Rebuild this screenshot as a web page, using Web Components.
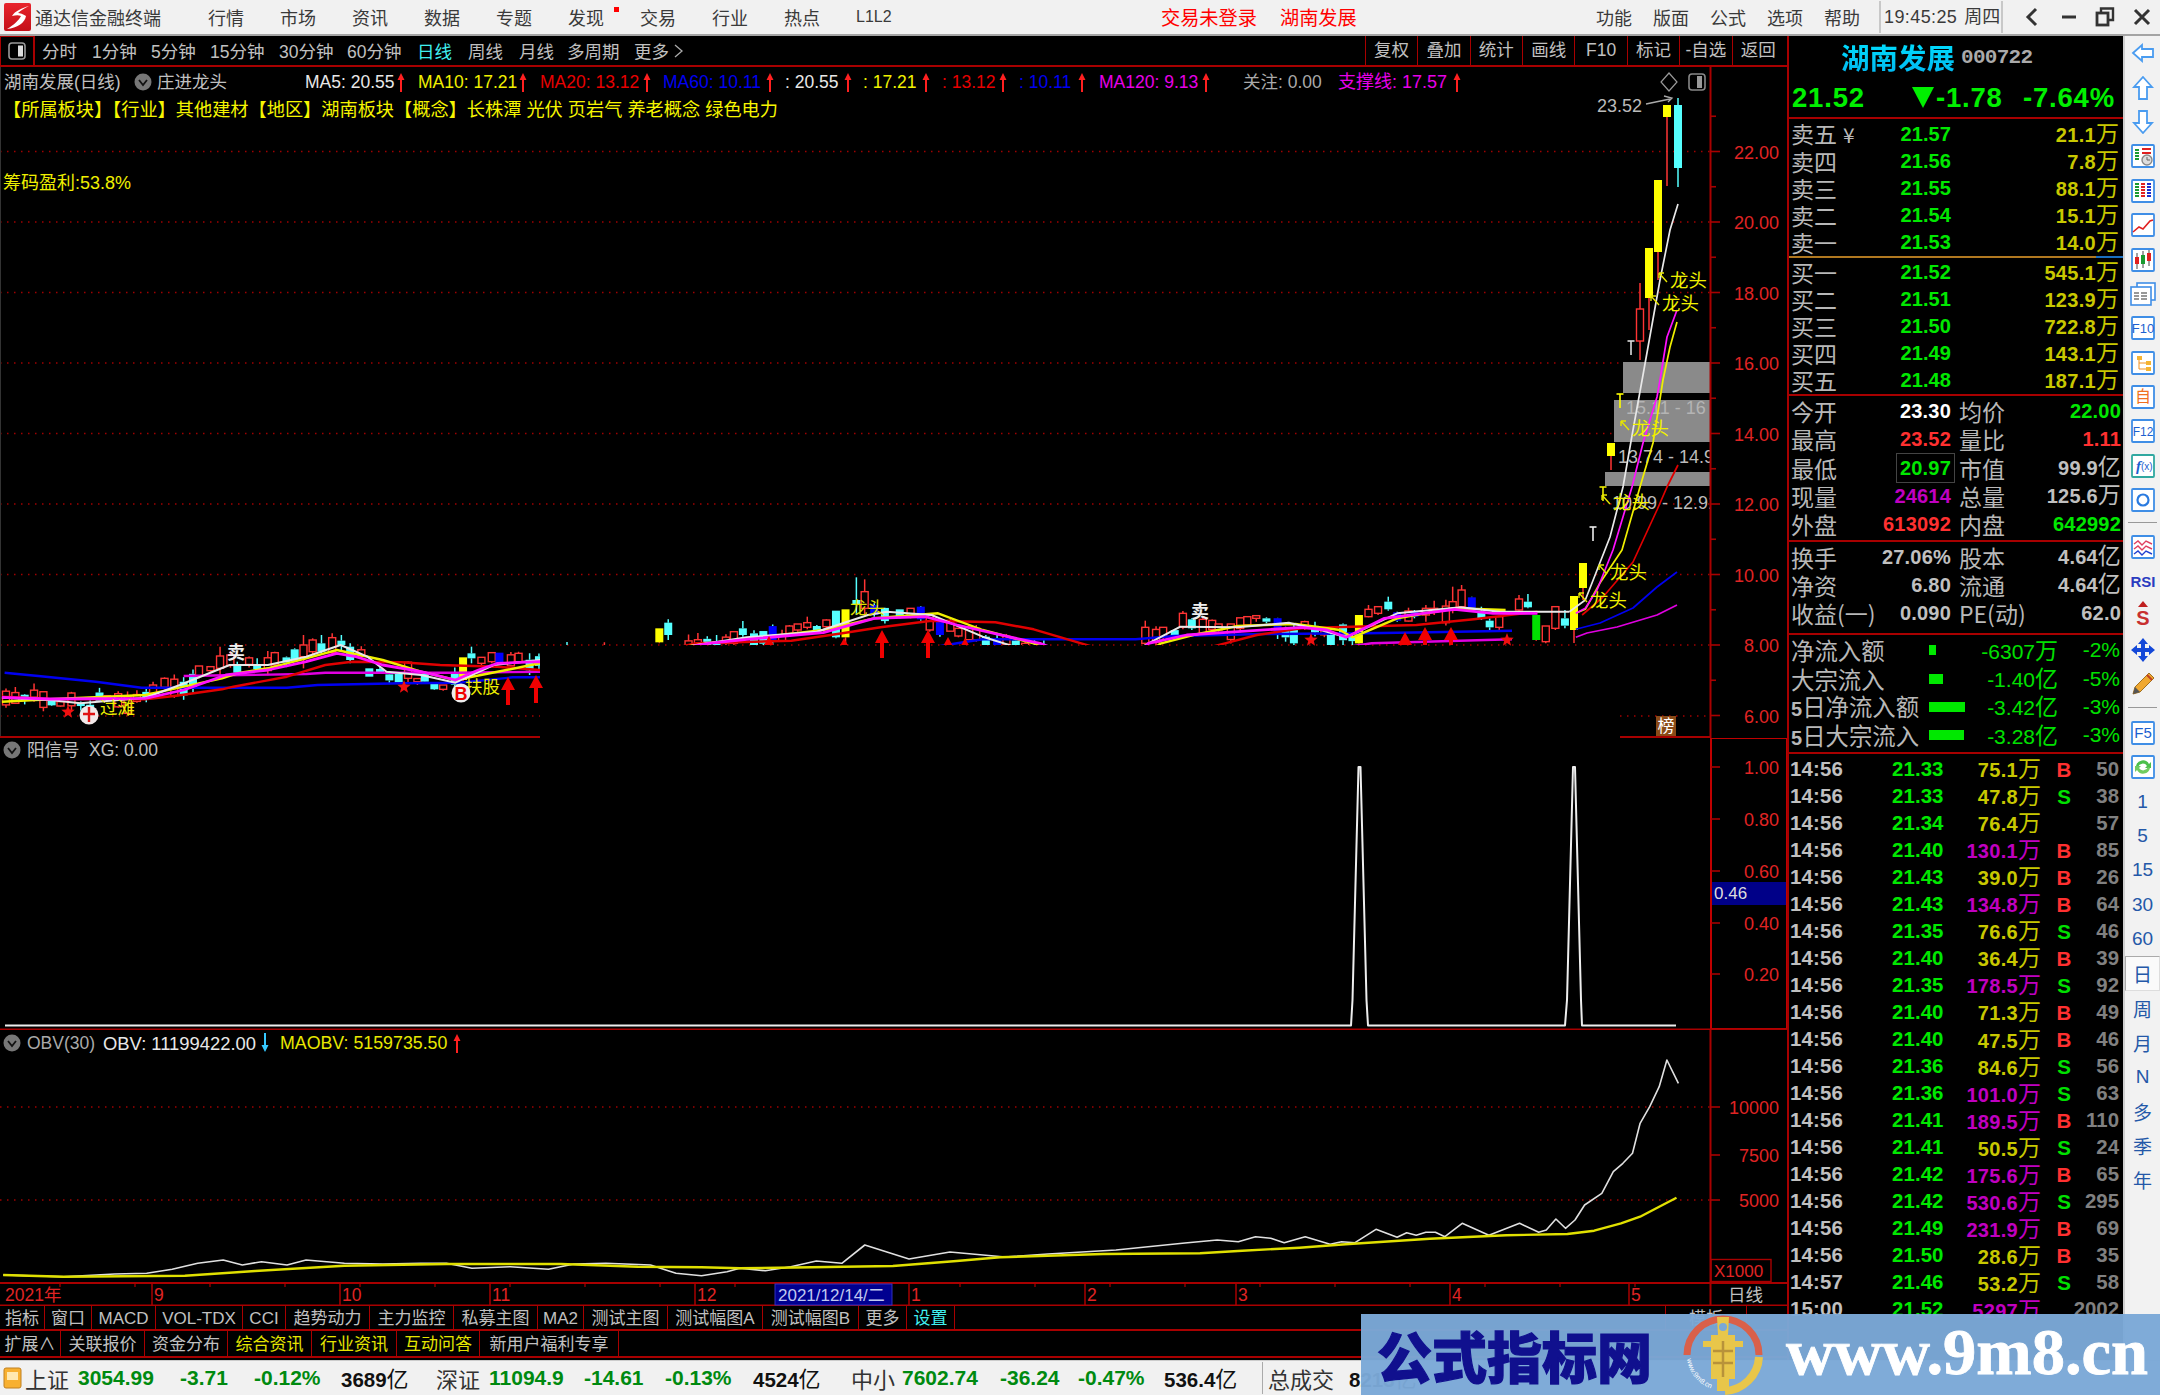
<!DOCTYPE html>
<html lang="zh-CN"><head><meta charset="utf-8"><title>通达信金融终端</title>
<style>
html,body{margin:0;padding:0;background:#000}
body{width:2160px;height:1395px;overflow:hidden;position:relative;font-family:"Liberation Sans","Noto Sans CJK SC",sans-serif;display:flex;flex-direction:column}
</style></head><body>
<tdx-titlebar></tdx-titlebar>
<tdx-workspace>
  <tdx-chart-column slot="chart">
    <tdx-period-bar></tdx-period-bar>
    <tdx-pane-main></tdx-pane-main>
    <tdx-pane-signal></tdx-pane-signal>
    <tdx-pane-obv></tdx-pane-obv>
    <tdx-date-axis></tdx-date-axis>
    <tdx-tab-row h="25">
      <tdx-tab w="45">指标</tdx-tab><tdx-tab w="47">窗口</tdx-tab><tdx-tab w="64">MACD</tdx-tab><tdx-tab w="87">VOL-TDX</tdx-tab><tdx-tab w="43">CCI</tdx-tab><tdx-tab w="84">趋势动力</tdx-tab><tdx-tab w="84">主力监控</tdx-tab><tdx-tab w="84">私募主图</tdx-tab><tdx-tab w="46">MA2</tdx-tab><tdx-tab w="84">测试主图</tdx-tab><tdx-tab w="95">测试幅图A</tdx-tab><tdx-tab w="96">测试幅图B</tdx-tab><tdx-tab w="48">更多</tdx-tab><tdx-tab w="48" tone="c">设置</tdx-tab><tdx-tab w="711"></tdx-tab><tdx-tab w="81">模板</tdx-tab>
    </tdx-tab-row>
    <tdx-tab-row h="27">
      <tdx-tab w="61">扩展∧</tdx-tab><tdx-tab w="84">关联报价</tdx-tab><tdx-tab w="83">资金分布</tdx-tab><tdx-tab w="84" tone="y">综合资讯</tdx-tab><tdx-tab w="85" tone="y">行业资讯</tdx-tab><tdx-tab w="83" tone="y">互动问答</tdx-tab><tdx-tab w="139">新用户福利专享</tdx-tab>
    </tdx-tab-row>
  </tdx-chart-column>
  <tdx-quote slot="quote">
    <tdx-quote-head></tdx-quote-head>
    <tdx-order-book></tdx-order-book>
    <tdx-stats></tdx-stats>
    <tdx-flows></tdx-flows>
    <tdx-ticks></tdx-ticks>
  </tdx-quote>
  <tdx-sidebar slot="side"></tdx-sidebar>
</tdx-workspace>
<tdx-statusbar></tdx-statusbar>
<tdx-watermark></tdx-watermark>
<script>
function def(name,css,html){customElements.define(name,class extends HTMLElement{connectedCallback(){if(this.shadowRoot)return;const r=this.attachShadow({mode:'open'});r.innerHTML='<style>'+css+'</style>'+(typeof html==='function'?html(this):html);}});}
const CJK='"Liberation Sans","Noto Sans CJK SC",sans-serif';
const RED='#a80000',LBL='#e02424',GREY='#c0c0c0';

/* ---------- svg helpers ---------- */
const T=(x,y,s,fill,size=17.5,anchor='start',extra='')=>`<text x="${x}" y="${y}" fill="${fill}" font-size="${size}" text-anchor="${anchor}" dominant-baseline="central" ${extra}>${s}</text>`;
const R=(x,y,w,h,f,extra='')=>`<rect x="${x}" y="${y}" width="${w}" height="${h}" fill="${f}" ${extra}/>`;
const Ln=(a,b,c,d,col,w=1,extra='')=>`<line x1="${a}" y1="${b}" x2="${c}" y2="${d}" stroke="${col}" stroke-width="${w}" ${extra}/>`;
const P=(pts,col,w=2)=>`<polyline fill="none" stroke="${col}" stroke-width="${w}" stroke-linejoin="round" points="${pts.map(p=>p[0].toFixed(1)+','+p[1].toFixed(1)).join(' ')}"/>`;
const Seg=(pts,col,w=2.6)=>{const a=pts.filter(p=>p[0]<=1572),b=pts.filter(p=>p[0]>=1560);return P(a,col,w)+P(b,col,1.7);};
const Dots=(a,b,y)=>Ln(a,y,b,y,'#a00000',1.5,'stroke-dasharray="1.5 5.5"');
const UpA=(x,cy,c='#ff2020')=>`<path d="M${x} ${cy-9}L${x+3.5} ${cy-2}H${x+1}V${cy+10}H${x-1}V${cy-2}H${x-3.5}Z" fill="${c}"/>`;
const DnA=(x,cy,c='#35c8ff')=>`<path d="M${x} ${cy+9}L${x+3.5} ${cy+2}H${x+1}V${cy-10}H${x-1}V${cy+2}H${x-3.5}Z" fill="${c}"/>`;
const Chev=(cx,cy)=>`<circle cx="${cx}" cy="${cy}" r="8.5" fill="#777"/><path d="M${cx-4} ${cy-2}L${cx} ${cy+3}L${cx+4} ${cy-2}" fill="none" stroke="#111" stroke-width="1.8"/>`;
const Star=(cx,cy,r=7)=>{let d='';for(let i=0;i<10;i++){const a=-Math.PI/2+i*Math.PI/5,q=i%2?r*.42:r;d+=(i?'L':'M')+(cx+q*Math.cos(a)).toFixed(1)+' '+(cy+q*Math.sin(a)).toFixed(1);}return `<path d="${d}Z" fill="#f01010"/>`;};
const BigUp=(x,top)=>`<path d="M${x} ${top}L${x+7} ${top+13}H${x+2}V${top+28}H${x-2}V${top+13}H${x-7}Z" fill="#f00000"/>`;
const svgCss=`:host{display:block;flex:none}svg{display:block;font-family:${CJK};background:#000}`;

/* ---------- chart data ---------- */
const L=a=>a.map(([X,Y])=>[X/2.613,600+Y/3]);
const M=a=>a.map(([X,Y])=>[600+X/1.568,550+Y/3]);
const white=[...L([[5,293],[130,300],[210,310],[380,293],[470,255],[600,195],[700,195],[800,170],[890,135],[960,170],[1010,215],[1100,225],[1190,248],[1290,195],[1410,180]]),...M([[0,330],[100,300],[170,280],[230,262],[340,245],[420,195],[450,185],[520,195],[600,260],[650,290],[720,340],[810,340],[860,280],[910,230],[1000,232],[1080,218],[1130,240],[1170,262],[1250,190],[1350,172],[1410,185],[1470,185],[1520,185],[1545,150]]),[1592,583],[1610,537],[1623,487],[1633,430],[1643,375],[1660,280],[1670,230],[1678,204]];
const yellow=[...L([[5,305],[130,298],[380,285],[480,260],[580,235],[620,220],[700,205],[800,175],[880,150],[1000,180],[1100,215],[1190,240],[1280,220],[1410,190]]),...M([[0,330],[100,300],[170,280],[350,240],[430,205],[530,190],[600,240],[680,280],[750,340],[830,340],[880,280],[930,255],[1000,228],[1090,222],[1160,240],[1180,262],[1250,205],[1340,175],[1420,180],[1530,190],[1545,178]]),[1600,583],[1622,550],[1640,487],[1653,443],[1663,380],[1670,347],[1677,322]];
const red=[...L([[5,290],[130,297],[380,298],[460,287],[580,268],[610,260],[750,230],[850,195],[920,185],[1050,187],[1150,195],[1300,200],[1410,210]]),...M([[0,340],[150,280],[300,272],[380,250],[440,232],[520,212],[620,217],[680,238],[740,272],[790,300],[900,320],[980,280],[1030,255],[1100,235],[1150,232],[1280,225],[1370,208],[1470,185],[1540,195]]),[1603,597],[1633,562],[1657,510],[1667,487],[1678,465]];
const blue=[...L([[12,218],[100,228],[250,245],[370,263],[750,263],[830,255],[1050,250],[1200,248],[1340,232],[1410,232]]),...M([[400,330],[560,280],[600,268],[840,268],[900,258],[1040,252],[1200,250],[1300,247],[1430,242],[1530,238]]),[1600,623],[1633,608],[1657,587],[1677,572]];
const mag=[...L([[5,292],[130,297],[380,295],[480,270],[590,225],[700,210],[800,185],[880,160],[930,170],[1000,195],[1100,215],[1190,240],[1250,210],[1300,190],[1410,185]]),...M([[0,340],[170,280],[230,268],[350,248],[430,205],[510,200],[560,225],[640,260],[690,280],[770,340],[830,340],[860,280],[920,255],[1000,245],[1100,232],[1140,240],[1170,262],[1230,205],[1340,178],[1400,190],[1470,190],[1530,190],[1545,175]]),[1597,590],[1613,550],[1632,487],[1643,443],[1657,397],[1660,380],[1667,337],[1677,310]];
const mag2=[...L([[480,228],[800,222],[850,218],[1200,218],[1410,215]]),...M([[1000,340],[1210,280],[1430,268],[1530,262]]),[1587,633],[1617,627],[1657,615],[1677,605]];
const interp=(pts,x)=>{for(let i=1;i<pts.length;i++){if(x<=pts[i][0]&&pts[i][0]>pts[i-1][0]){const [a,b]=pts[i-1],[c,d]=pts[i];return b+(d-b)*(x-a)/(c-a);}}return pts[pts.length-1][1];};
const exL=[[575,168,205,140,225,'r'],[520,198,228,198,235,'r'],[840,130,155,105,165,'c'],[793,135,170,105,205,'r'],[817,120,155,115,165,'r'],[868,113,158,100,165,'r'],[718,158,195,155,200,'r'],[770,148,182,145,185,'c'],[892,122,135,105,155,'c'],[915,140,180,130,190,'c'],[965,205,230,205,230,'c'],[1210,172,240,172,245,'y'],[1232,160,175,140,190,'c'],[1285,158,185,158,190,'r'],[1355,160,185,155,190,'r'],[1305,158,190,158,190,'b'],[1258,172,190,172,200,'r'],[1110,220,245,215,250,'c'],[1135,252,268,250,270,'c'],[1158,255,268,255,272,'r'],[620,195,218,185,220,'c'],[135,298,316,295,318,'c'],[158,305,318,305,320,'r'],[400,255,280,245,285,'r'],[430,235,262,232,265,'r'],[672,195,208,175,210,'c'],[550,200,212,198,215,'r'],[280,287,300,287,302,'r']].map(([X,a,b,c,d,t])=>[X/2.613,600+a/3,600+b/3,600+c/3,600+d/3,t]);
const exM=[[93,235,277,235,280,'y'],[107,218,255,208,270,'c'],[224,235,255,213,260,'c'],[210,245,280,245,285,'r'],[297,228,250,225,255,'r'],[310,222,240,222,245,'r'],[325,218,232,200,238,'r'],[355,210,230,208,235,'r'],[340,228,245,225,250,'c'],[370,182,262,182,265,'c'],[385,178,262,178,290,'y'],[402,150,165,82,195,'c'],[415,125,175,88,200,'r'],[430,165,195,160,200,'b'],[487,175,200,175,205,'r'],[470,178,198,178,205,'c'],[503,170,208,168,212,'b'],[517,195,240,195,245,'r'],[533,210,255,208,260,'b'],[562,235,258,235,262,'r'],[590,235,270,225,275,'r'],[605,260,290,255,300,'c'],[855,232,280,212,285,'r'],[883,232,262,232,270,'r'],[914,190,232,183,238,'r'],[928,208,235,205,240,'c'],[970,222,240,222,245,'r'],[1015,200,225,200,228,'r'],[1029,197,205,197,215,'r'],[1045,205,215,202,220,'c'],[1105,215,235,212,240,'r'],[1075,235,262,230,275,'c'],[1088,238,280,225,290,'c'],[1146,255,290,250,295,'c'],[1190,195,280,195,290,'y'],[1205,178,200,165,202,'r'],[1220,170,190,170,195,'r'],[1236,155,178,140,182,'c'],[1250,187,212,185,215,'b'],[1277,183,200,180,205,'b'],[1295,175,195,165,215,'r'],[1308,175,185,152,195,'r'],[1337,155,180,110,190,'r'],[1351,120,170,105,175,'r'],[1367,142,182,140,185,'b'],[1382,185,205,170,210,'c'],[1395,212,232,205,240,'c'],[1410,200,232,195,240,'r'],[1441,147,180,135,185,'r'],[1455,155,172,132,175,'c'],[1468,195,270,195,272,'g'],[1483,228,275,228,280,'r'],[1498,170,235,168,240,'r'],[1513,205,227,180,235,'c']].map(([X,a,b,c,d,t])=>[600+X/1.568,550+a/3,550+b/3,550+c/3,550+d/3,t]);
const exR=[[1574,596,630,596,643,'y'],[1583,563,588,563,600,'y'],[1611,443,456,443,470,'y'],[1640,309,341,283,360,'r'],[1649,248,298,248,330,'y'],[1658,180,252,180,280,'y'],[1667,105,117,105,186,'y'],[1678,105,168,98,187,'c']];
const explicit=[...exL,...exM,...exR];
let seed=722;const rnd=()=>{seed=(seed*1664525+1013904223)>>>0;return seed/4294967296;};
const colors={r:'#ff3434',c:'#55ffff',y:'#ffff00',g:'#00e000',b:'#0000ff'};
function candle([x,a,b,c,d,t]){const col=colors[t];const wickCol=(t==='y'||t==='g')?'#ff3434':(t==='b'?'#55ffff':col);
 let s=Ln(x,c,x,a,wickCol,1.5)+Ln(x,b,x,d,wickCol,1.5);
 s+= t==='r'?`<rect x="${x-3.5}" y="${a}" width="7" height="${Math.max(b-a,2)}" fill="#000" stroke="${col}" stroke-width="1.4"/>`:R(x-4,a,8,Math.max(b-a,2),col);return s;}
function allCandles(){let out='';for(let x=6;x<1500;x+=9.35){if(explicit.some(e=>Math.abs(e[0]-x)<5.5))continue;const base=interp(white,x)+(rnd()-.5)*12;const h=1.5+rnd()*7;const k=rnd();const t=k<.55?'r':(k<.95?'c':'b');out+=candle([x,base-h,base+h,base-h-rnd()*7,base+h+rnd()*5,t]);}return out+explicit.map(candle).join('');}
const tee=(x,y,c)=>Ln(x-3.5,y,x+3.5,y,c,1.6)+Ln(x,y,x,y+14,c,1.6);
const dragon=(x,y)=>`<path d="M${x-11} ${y-7}L${x-3} ${y+2}M${x-11} ${y-7}v5M${x-11} ${y-7}h5" stroke="#e6e600" fill="none" stroke-width="1.4"/>`+T(x,y,'龙头','#f0f000',18.4);

/* ---------- title bar ---------- */
const logo=`<svg width="27" height="28" viewBox="0 0 27 28"><defs><linearGradient id="l" x1="0" y1="0" x2="0" y2="1"><stop offset="0" stop-color="#e8242c"/><stop offset="1" stop-color="#c41018"/></linearGradient></defs><rect width="27" height="28" rx="2" fill="url(#l)"/><path d="M25 3C18 5 11 8 8 13C12 12 15 12 17 13C15 17 10 22 3 26C13 25 21 20 22 13C19 11 16 10 14 10C17 7 21 5 25 3Z" fill="#fff"/></svg>`;
const ctl={back:`<svg width="18" height="20" viewBox="0 0 18 20"><path d="M12 2L4 10L12 18" fill="none" stroke="#333" stroke-width="3"/></svg>`,
 min:`<svg width="18" height="20" viewBox="0 0 18 20"><path d="M2 10H16" stroke="#333" stroke-width="3"/></svg>`,
 max:`<svg width="20" height="20" viewBox="0 0 20 20"><path d="M6 5V1.5H18V13H14" fill="none" stroke="#333" stroke-width="2.4"/><rect x="2" y="6" width="11" height="12" fill="none" stroke="#333" stroke-width="2.8"/></svg>`,
 x:`<svg width="18" height="20" viewBox="0 0 18 20"><path d="M2 3L16 17M16 3L2 17" stroke="#333" stroke-width="3"/></svg>`};
def('tdx-titlebar',`:host{display:flex;flex:none;height:34px;border-bottom:2px solid #a4a4a4;background:#f1f1f1;align-items:center;font-size:18px;color:#3a3a3a;box-sizing:content-box}
.logo{width:35px;padding-left:4px;box-sizing:border-box;display:flex}.logo svg{display:block}
.name{width:173px;white-space:nowrap}
.m{width:72px;white-space:nowrap;position:relative}.m i{position:absolute;left:46px;top:3px;width:5px;height:5px;background:#f00}
.ll{font-size:16px;width:72px}.red{color:#f00;font-size:19.2px;white-space:nowrap}
.r{width:57px;white-space:nowrap}.c1{margin-left:auto}
.time{width:124px;margin-left:-1px;padding-left:3px;box-sizing:border-box;border-left:2px solid #c8c8c8;border-right:2px solid #c8c8c8;height:32px;line-height:32px;white-space:nowrap;letter-spacing:.4px}
.time span{margin-left:7px;letter-spacing:0}
.ct{display:flex;width:157px;justify-content:space-around;padding-left:12px;box-sizing:border-box}svg{display:block}`,
`<div class="logo">${logo}</div><div class="name">通达信金融终端</div>
<div class="m">行情</div><div class="m">市场</div><div class="m">资讯</div><div class="m">数据</div><div class="m">专题</div><div class="m">发现<i></i></div><div class="m">交易</div><div class="m">行业</div><div class="m">热点</div><div class="ll">L1L2</div>
<div class="red" style="margin-left:233px;width:119px">交易未登录</div><div class="red">湖南发展</div>
<div class="r c1">功能</div><div class="r">版面</div><div class="r">公式</div><div class="r">选项</div><div class="r" style="width:56px">帮助</div>
<div class="time">19:45:25<span>周四</span></div><div class="ct">${ctl.back}${ctl.min}${ctl.max}${ctl.x}</div>`);

def('tdx-workspace',`:host{display:flex;flex:none;height:1324px;background:#000}`,`<slot name="chart"></slot><slot name="quote"></slot><slot name="side"></slot>`);
def('tdx-chart-column',`:host{display:flex;flex-direction:column;flex:none;width:1787px;height:1324px}`,`<slot></slot>`);

/* ---------- period bar ---------- */
def('tdx-period-bar',`:host{display:flex;flex:none;height:29px;border-bottom:2px solid ${RED};align-items:center;font-size:17.5px;color:${GREY};white-space:nowrap}
.i{width:35px;height:29px;box-sizing:border-box;border:1px solid ${RED};border-width:1px 2px 0 1px;display:flex;align-items:center;justify-content:center;margin-right:7px}
.on{color:#40f0f0}.s{flex:1}.b{width:52.4px;height:29px;line-height:29px;text-align:center;border-left:1.5px solid ${RED};box-sizing:border-box}svg{display:block}`,
()=>{const it=[[50,'分时'],[59,'1分钟'],[59,'5分钟'],[69,'15分钟'],[68,'30分钟'],[70,'60分钟'],[51,'日线','on'],[51,'周线'],[48,'月线'],[67,'多周期']];
 return `<div class="i"><svg width="18" height="18" viewBox="0 0 18 18"><rect x="1" y="1" width="16" height="16" rx="3" fill="none" stroke="#999" stroke-width="1.6"/><rect x="10" y="3.5" width="5" height="11" fill="#ddd"/></svg></div>`+it.map(a=>`<div style="width:${a[0]}px" class="${a[2]||''}">${a[1]}</div>`).join('')+`<div>更多 <svg style="display:inline" width="9" height="14" viewBox="0 0 9 14"><path d="M1 1L8 7L1 13" fill="none" stroke="#aaa" stroke-width="1.3"/></svg></div><div class="s"></div>`+['复权','叠加','统计','画线','F10','标记','-自选','返回'].map(s=>`<div class="b">${s}</div>`).join('')+`<div style="width:3px"></div>`;});

/* ---------- main pane ---------- */
def('tdx-pane-main',svgCss,()=>{
 let s=`<svg width="1787" height="671" viewBox="0 67 1787 671">`;
 const prices=[22,20,18,16,14,12,10,8];
 prices.forEach(p=>{const y=645-(p-8)*35.25;s+=Dots(0,p===16?1622:(p===14?1612:1710),y);});
 s+=Dots(0,540,716)+Dots(1620,1710,716);
 s+=R(1623,362,87,31,'#8a8a8a')+R(1614,400,96,42,'#8a8a8a')+R(1605,472,105,14,'#8a8a8a');
 s+=`<svg x="1600" y="395" width="110" height="120" viewBox="1600 395 110 120">`+T(1626,408,'15.11 - 16','#b4b4b4',18)+T(1618,457,'13.74 - 14.9','#bbb',18)+T(1612,503,'10.99 - 12.91','#bbb',18)+`</svg>`;
 s+=`<clipPath id="cp"><rect x="0" y="68" width="1710" height="577"/><rect x="0" y="645" width="540" height="92"/><rect x="1620" y="645" width="90" height="92"/></clipPath><g clip-path="url(#cp)">`;
 s+=allCandles();
 s+=Seg(blue,'#0000f0',2.4)+Seg(mag2,'#e000e0',2.4)+Seg(red,'#e00000',2.4)+Seg(yellow,'#f0f000',2.4)+Seg(white,'#e8e8e8',2)+Seg(mag,'#ff10ff',2.8);
 s+=`</g>`;
 s+=tee(1631,341,'#ddd')+tee(1620,394,'#ff0')+tee(1603,487,'#ee0')+tee(1593,527,'#eee');
 s+=T(236,653,'卖','#eee',18,'middle','font-weight="700"')+T(1200,612,'卖','#eee',18,'middle','font-weight="700"');
 s+=T(100,708,'过滩','#f0f000',17.5)+T(465,687,'扶股','#f0f000',17.5)+T(850,608,'龙头','#e0e000',17.5);
 [[68,712],[404,687],[1311,640],[1507,640]].forEach(a=>s+=Star(a[0],a[1]));
 s+=`<circle cx="89" cy="715" r="9.5" fill="#f2e8e8"/><path d="M89 707V722M83 714H95" stroke="#e01010" stroke-width="2.4"/>`;
 s+=`<circle cx="461" cy="693" r="9.5" fill="#eee"/>`+T(461,694,'B','#f00000',18,'middle','font-weight="700"');
 [[508,677],[536,675],[882,630],[928,630]].forEach(a=>s+=BigUp(a[0],a[1]));
 s+=`<clipPath id="ca"><rect x="0" y="68" width="1710" height="577"/></clipPath><g clip-path="url(#ca)">`;
 [[769,636],[844,638],[948,637],[965,638],[1405,632],[1425,627],[1451,627]].forEach(a=>s+=BigUp(a[0],a[1]));
 s+=`</g>`;
 [[1670,280],[1662,303],[1632,428],[1613,502],[1610,572],[1590,600]].forEach(a=>s+=dragon(a[0],a[1]));
 s+=R(1656,716,20,20,'#8a4a17')+T(1666,726,'榜','#fff',17,'middle');
 s+=T(1597,106,'23.52','#bbb',18)+`<path d="M1646 104L1670 99M1664 96L1672 98L1668 102" fill="none" stroke="#aaa" stroke-width="1.3"/>`;
 s+=Ln(1710.5,67,1710.5,738,RED,2)+Ln(0.5,67,0.5,738,'#333',1);
 for(let p=6;p<=23;p++){const y=645-(p-8)*35.25;s+=Ln(1711,y,p%2?1716:1720,y,RED,1.6);}
 [22,20,18,16,14,12,10,8,6].forEach(p=>{const y=645-(p-8)*35.25;s+=T(1779,y+1,p.toFixed(2),LBL,18,'end');});
 s+=Ln(0,737,540,737,RED,2)+Ln(1620,737,1711,737,RED,2);
 const y=82;
 s+=T(4,y,'湖南发展(日线)',GREY)+Chev(143,y)+T(157,y,'庄进龙头',GREY);
 s+=T(305,y,'MA5: 20.55','#e8e8e8')+UpA(401,y)+T(418,y,'MA10: 17.21','#f0f000')+UpA(523,y)+T(540,y,'MA20: 13.12','#e80000')+UpA(647,y)+T(663,y,'MA60: 10.11','#0000f0')+UpA(770,y);
 s+=T(785,y,': 20.55','#e8e8e8')+UpA(848,y)+T(863,y,': 17.21','#f0f000')+UpA(926,y)+T(942,y,': 13.12','#e80000')+UpA(1003,y)+T(1019,y,': 10.11','#0000f0')+UpA(1082,y);
 s+=T(1099,y,'MA120: 9.13','#e800e8')+UpA(1206,y)+T(1243,y,'关注: 0.00','#aaa')+T(1338,y,'支撑线: 17.57','#e800e8',18)+UpA(1457,y);
 s+=`<path d="M1669 73L1677 82L1669 91L1661 82Z" fill="none" stroke="#999" stroke-width="1.2"/><rect x="1689" y="74" width="16" height="16" rx="3" fill="none" stroke="#888" stroke-width="1.6"/><rect x="1697" y="76" width="5" height="12" fill="#999"/>`;
 s+=T(3,109.5,'【所属板块】【行业】其他建材【地区】湖南板块【概念】长株潭 光伏 页岩气 养老概念 绿色电力','#f6f600',18.2);
 s+=T(3,183,'筹码盈利:53.8%','#f0f000',18);
 return s+`</svg>`;});

/* ---------- signal pane ---------- */
def('tdx-pane-signal',svgCss,()=>{
 let s=`<svg width="1787" height="292" viewBox="0 738 1787 292">`;
 const spike=x=>[[x-8,1025],[x-7,1000],[x-1,767],[x+1,767],[x+7,1000],[x+8,1025]];
 const base=[[5,1025.5],[1351,1025.5],...spike(1359.5).slice(1,5),[1368,1025.5],[1565,1025.5],...spike(1574).slice(1,5),[1582,1025.5],[1676,1025.5]];
 s+=P(base,'#eee',2);
 s+=T(27,750,'阳信号',GREY)+Chev(12,750)+T(89,750,'XG: 0.00',GREY);
 s+=`<rect x="1711" y="738" width="76" height="291" fill="none" stroke="#c00000" stroke-width="2"/>`;
 [[1,767],[.8,819],[.6,871],[.4,923],[.2,974]].forEach(a=>{s+=Ln(1711,a[1],1720,a[1],RED,1.6)+T(1779,a[1]+1,a[0].toFixed(2),LBL,18,'end');});
 s+=R(1712,882,74,23,'#000088')+T(1714,893,'0.46','#ddd',17);
 s+=Ln(0,1029.5,1787,1029.5,RED,2);
 return s+`</svg>`;});

/* ---------- OBV pane ---------- */
def('tdx-pane-obv',svgCss,()=>{
 let s=`<svg width="1787" height="252" viewBox="0 1030 1787 252">`;
 const Z6=a=>a.map(([X,Y])=>[X/1.568,1260+Y/3]),Z12=a=>a.map(([X,Y])=>[1200+X/2.613,1000+Y/3]);
 const obv=[...Z6([[5,45],[100,50],[180,42],[230,40],[270,28],[310,10],[350,0],[380,15],[410,5],[450,15],[480,0],[540,10],[600,12],[660,10],[700,10],[740,25],[800,20],[860,28],[900,12],[950,10],[1020,15],[1060,40],[1100,47],[1140,35],[1160,25],[1200,32],[1240,20],[1280,3],[1320,10],[1356,-45]]),[909,1259],[950,1252],[1005,1257],[1048,1254],[1116,1250],[1185,1243],...Z12([[45,720],[100,725],[145,710],[185,715],[220,728],[275,710],[340,733],[370,725],[405,728],[460,688],[515,712],[540,698],[565,706],[590,697],[615,697],[640,710],[685,670],[755,706],[835,670],[885,697],[905,690],[930,657],[955,685],[980,660],[1005,615],[1050,580],[1080,515],[1105,490],[1130,460],[1150,370],[1175,320],[1200,260],[1220,180],[1250,250]])];
 const ma=[...Z6([[5,45],[100,50],[290,47],[400,33],[540,17],[700,12],[880,12],[1000,20],[1100,22],[1160,25],[1400,18],[1500,3],[1568,-8]]),[1103,1254],...Z12([[0,760],[110,752],[260,743],[380,733],[480,725],[600,716],[700,711],[800,706],[960,702],[1030,692],[1100,670],[1150,650],[1200,620],[1245,593]])];
 s+=Dots(0,1710,1107)+Dots(0,1710,1200);
 s+=P(obv,'#e0e0e0',1.6)+P(ma,'#e0e000',2.4);
 s+=Chev(12,1043)+T(27,1043,'OBV(30)','#aaa')+T(103,1043,'OBV: 11199422.00','#e8e8e8',18.4)+DnA(265,1043)+T(280,1043,'MAOBV: 5159735.50','#e8e800',17.8)+UpA(457,1043);
 s+=Ln(1710.5,1030,1710.5,1282,RED,2);
 [[10000,1107],[7500,1155],[5000,1200]].forEach(a=>{s+=Ln(1711,a[1],1720,a[1],RED,1.6)+T(1779,a[1]+1,a[0],LBL,18,'end');});
 s+=`<rect x="1711" y="1259.5" width="60" height="22" fill="none" stroke="${RED}" stroke-width="1.4"/>`+T(1714,1271,'X1000',LBL,17);
 return s+`</svg>`;});

/* ---------- date axis ---------- */
def('tdx-date-axis',svgCss,()=>{
 let s=`<svg width="1787" height="24" viewBox="0 1282 1787 24">`;
 s+=Ln(0,1283,1787,1283,RED,2)+Ln(0,1305.5,1787,1305.5,RED,2);
 [[152,'9'],[340,'10'],[490,'11'],[695,'12'],[909,'1'],[1085,'2'],[1236,'3'],[1450,'4'],[1629,'5']].forEach(a=>{s+=Ln(a[0],1283,a[0],1305,RED,1.5)+T(a[0]+2,1295,a[1],LBL,17.5);});
 for(let x=60;x<1700;x+=75){s+=Ln(x,1283,x,1287,RED,1.2);}
 s+=T(5,1295,'2021年',LBL,17.5);
 s+=R(775,1284,117,21,'#000090','stroke="#3030c0"')+T(778,1295,'2021/12/14/二','#c0c8f0',17);
 s+=Ln(1710.5,1283,1710.5,1305,RED,2)+T(1728,1295,'日线',GREY,17.5);
 return s+`</svg>`;});

/* ---------- tabs ---------- */
customElements.define('tdx-tab-row',class extends HTMLElement{connectedCallback(){if(this.shadowRoot)return;this.attachShadow({mode:'open'}).innerHTML=`<style>:host{display:flex;flex:none;box-sizing:border-box;height:${this.getAttribute('h')}px;border-bottom:2px solid ${RED};overflow:hidden;background:#000}</style><slot></slot>`;}});
customElements.define('tdx-tab',class extends HTMLElement{connectedCallback(){if(this.shadowRoot)return;const c={c:'#40f0f0',y:'#e6e600'}[this.getAttribute('tone')]||GREY;this.attachShadow({mode:'open'}).innerHTML=`<style>:host{display:flex;align-items:center;justify-content:center;flex:none;box-sizing:border-box;width:${this.getAttribute('w')}px;padding-top:3px;border-right:1.5px solid ${RED};font-size:17px;line-height:20px;color:${c};white-space:nowrap}</style><slot></slot>`;}});

/* ---------- quote ---------- */
def('tdx-quote',`:host{display:flex;flex-direction:column;flex:none;width:336px;height:1324px;box-sizing:border-box;border-left:2px solid ${RED};background:#000;overflow:hidden;color:${GREY}}`,`<slot></slot>`);
const numCss=`b{font-weight:700;font-size:20px;letter-spacing:.3px}u{text-decoration:none;font-size:23px;font-weight:400;font-family:"Noto Sans CJK SC",sans-serif;letter-spacing:0}`;
def('tdx-quote-head',`:host{display:block;flex:none;height:83px;box-sizing:border-box;border-bottom:2px solid ${RED};overflow:hidden}
.n{height:40px;padding-left:52px;display:flex;align-items:center;white-space:nowrap}.n strong{font-size:28.5px;font-weight:700;background:linear-gradient(#00e4ff,#00b4f0);-webkit-background-clip:text;background-clip:text;color:transparent}
.n span{font:700 21px/1 "Liberation Mono",monospace;color:#aaa;margin-left:6px;margin-top:3px;letter-spacing:-.7px}
.p{display:flex;align-items:center;height:43px;color:#00f000;font-weight:700;font-size:27.5px;white-space:nowrap;padding-left:3px;letter-spacing:.8px}
.p i{font-style:normal;width:120px}.p em{font-style:normal;width:111px;display:flex;align-items:center}.p em svg{margin-right:2px}`,
`<div class="n"><strong>湖南发展</strong><span>000722</span></div><div class="p"><i>21.52</i><em><svg width="22" height="21" viewBox="0 0 22 21"><path d="M0 0H22L11 21Z" fill="#00f000"/></svg>-1.78</em><span>-7.64%</span></div>`);
def('tdx-order-book',`:host{display:block;flex:none;padding-top:1.5px}
.r{display:grid;grid-template-columns:109px 51px 1fr;grid-template-rows:27px;height:27px;line-height:27px;align-items:center;padding-left:2px;white-space:nowrap}
.l{font-size:23px;font-family:"Noto Sans CJK SC",sans-serif;color:#b8b8b8;line-height:27px}.l i{font-style:normal;margin-left:6px;font-size:21px}
.p{color:#00e800;font-weight:700;font-size:20px;text-align:right;letter-spacing:.1px}.v{color:#c8c800;text-align:right;padding-right:4px}
.d{height:3px;background:linear-gradient(90deg,#b07820 0,#b07820 92%,#1a6fc0 92%);background-size:100% 2px;background-repeat:no-repeat;background-position:0 0}.e{height:0;border-bottom:2px solid ${RED}}${numCss}`,
()=>{const row=(l,p,v,e='')=>`<div class="r"><div class="l">${l}${e}</div><div class="p">${p}</div><div class="v"><b>${v}</b><u>万</u></div></div>`;
 return row('卖五','21.57','21.1','<i>¥</i>')+row('卖四','21.56','7.8')+row('卖三','21.55','88.1')+row('卖二','21.54','15.1')+row('卖一','21.53','14.0')+`<div class="d"></div>`+row('买一','21.52','545.1')+row('买二','21.51','123.9')+row('买三','21.50','722.8')+row('买四','21.49','143.1')+row('买五','21.48','187.1')+`<div class="e"></div>`;});
def('tdx-stats',`:host{display:block;flex:none}
.g{box-sizing:border-box;border-bottom:2px solid ${RED}}
.r{display:grid;grid-template-columns:109px 51px 8px 47px 1fr;align-items:center;padding-left:2px;white-space:nowrap}
.l{font-size:23px;font-family:"Noto Sans CJK SC",sans-serif;color:#b8b8b8;line-height:27px}
.v{font-weight:700;font-size:20px;line-height:27px;text-align:right;letter-spacing:.2px;justify-self:end;white-space:nowrap}
.last{padding-right:2px}.w{color:#fff}.g0{color:#00e800}.rd{color:#ff3030}.gy{color:#c0c0c0}.mg{color:#c000c0}
.box{outline:1px solid #444;outline-offset:3px}u{text-decoration:none;font-size:23px;font-weight:400;font-family:"Noto Sans CJK SC",sans-serif;line-height:20px}`,
()=>{const row=(h,a,b,bc,c,d,dc)=>`<div class="r" style="height:${h}px;grid-template-rows:${h}px"><div class="l">${a}</div><div class="v ${bc}">${b}</div><div></div><div class="l">${c}</div><div class="v last ${dc}">${d}</div></div>`;
 const Y='<u>亿</u>';
 return `<div class="g" style="height:146.5px;padding-top:2px">`+row(28.3,'今开','23.30','w','均价','22.00','g0')+row(28.3,'最高','23.52','rd','量比','1.11','rd')+row(28.3,'最低','<span class="box">20.97</span>','g0','市值','99.9'+Y,'gy')+row(28.3,'现量','24614','mg','总量','125.6<u>万</u>','gy')+row(28.3,'外盘','613092','rd','内盘','642992','g0')+`</div><div class="g" style="height:93px;padding-top:1px">`+row(28,'换手','27.06%','gy','股本','4.64'+Y,'gy')+row(28,'净资','6.80','gy','流通','4.64'+Y,'gy')+row(28,'收益(一)','0.090','gy','PE(动)','62.0','gy')+`</div>`;});
def('tdx-flows',`:host{display:block;flex:none;box-sizing:border-box;height:119px;padding-top:1px;border-bottom:2px solid ${RED}}
.r{display:grid;grid-template-columns:138px 40px 89px 62px;grid-template-rows:28.4px;height:28.4px;line-height:28px;align-items:center;padding-left:2px;white-space:nowrap}
.l{font-size:23.4px;font-family:"Noto Sans CJK SC",sans-serif;color:#b8b8b8}.l b{font:700 20px "Liberation Sans"}
.bar{height:10px;background:#00e800}.v{color:#00e000;font-size:21px;text-align:right;white-space:nowrap}.pc{color:#00e000;font-size:21px;text-align:right}u{text-decoration:none;font-size:23px;font-family:"Noto Sans CJK SC",sans-serif}`,
()=>{const row=(l,w,v,u,p)=>`<div class="r"><div class="l">${l}</div><div class="bar" style="width:${w}px"></div><div class="v">${v}<u>${u}</u></div><div class="pc">${p}</div></div>`;
 return row('净流入额',7,'-6307','万','-2%')+row('大宗流入',14,'-1.40','亿','-5%')+row('<b>5</b>日净流入额',36,'-3.42','亿','-3%')+row('<b>5</b>日大宗流入',35,'-3.28','亿','-3%');});
def('tdx-ticks',`:host{display:block;flex:none;padding-top:1.5px}
.r{display:grid;grid-template-columns:90px 12px 50px 99px 14px 18px 46px;grid-template-rows:27.05px;height:27.05px;line-height:27px;align-items:center;padding-left:1px;white-space:nowrap;font-size:20.4px;font-weight:700}
.t{color:#c0c0c0;letter-spacing:.2px}.p{color:#00e800;text-align:right;grid-column:3;letter-spacing:.1px}.v{color:#c8c800;text-align:right;font-size:20px}.m{color:#c000c0}.bs{font-size:20.5px;text-align:center}.B{color:#ff3030}.S{color:#00e000}.c{color:#808080;text-align:right;grid-column:7}${numCss}`,
()=>{const d=`21.33 75.1 B 50|21.33 47.8 S 38|21.34 76.4 _ 57|21.40 130.1 B 85|21.43 39.0 B 26|21.43 134.8 B 64|21.35 76.6 S 46|21.40 36.4 B 39|21.35 178.5 S 92|21.40 71.3 B 49|21.40 47.5 B 46|21.36 84.6 S 56|21.36 101.0 S 63|21.41 189.5 B 110|21.41 50.5 S 24|21.42 175.6 B 65|21.42 530.6 S 295|21.49 231.9 B 69|21.50 28.6 B 35`.split('|');
 const row=(t,s)=>{const [p,v,b,c]=s.split(' ');return `<div class="r"><div class="t">${t}</div><div class="p">${p}</div><div class="v ${parseFloat(v)>=100?'m':''}"><b>${v}</b><u>万</u></div><div></div><div class="bs ${b}" style="grid-column:6">${b==='_'?'':b}</div><div class="c">${c}</div></div>`;};
 return d.map(s=>row('14:56',s)).join('')+row('14:57','21.46 53.2 S 58')+row('15:00','21.52 5297 _ 2002');});

/* ---------- sidebar ---------- */
const bx=(inner,c='#3f8ee6')=>`<svg width="24" height="24" viewBox="0 0 24 24"><rect x="1" y="1" width="22" height="22" rx="1" fill="#fff" stroke="${c}" stroke-width="1.8"/>${inner}</svg>`;
const si=(t,c='#1c5fd0',w=700,f=12.5)=>`<text x="12" y="16.5" font-family="Liberation Sans" font-size="${f}" font-weight="${w}" fill="${c}" text-anchor="middle">${t}</text>`;
const dash=(x,y,c,n)=>{let s='';for(let i=0;i<n;i++)s+=`<rect x="${x}" y="${y+i*3}" width="4" height="2" fill="${c}"/>`;return s;};
const icons=[
 `<svg width="24" height="24" viewBox="0 0 24 24"><path d="M2 12L11 4V8H22V16H11V20Z" fill="#fff" stroke="#4a9cf0" stroke-width="1.8"/></svg>`,
 `<svg width="24" height="24" viewBox="0 0 24 24"><path d="M12 1L21 11H16V23H8V11H3Z" fill="#fff" stroke="#4a9cf0" stroke-width="1.8"/></svg>`,
 `<svg width="24" height="24" viewBox="0 0 24 24"><path d="M12 23L21 13H16V1H8V13H3Z" fill="#fff" stroke="#4a9cf0" stroke-width="1.8"/></svg>`,
 bx(dash(4,5,'#1a9a30',4)+`<rect x="11" y="4" width="9" height="2" fill="#e02020"/><rect x="11" y="8" width="9" height="2" fill="#e02020"/><circle cx="16" cy="16" r="5" fill="#ddd" stroke="#888" stroke-width="1.4"/><path d="M16 13v3h3" stroke="#666" fill="none"/>`),
 bx(dash(4,4,'#1a9a30',5)+dash(10,4,'#e02020',5)+dash(16,4,'#1a30d0',5)),
 bx(`<path d="M2 19L8 14L12 16L19 8L22 7" fill="none" stroke="#e02020" stroke-width="1.6"/>`),
 bx(`<path d="M6 5V21M12 3V20M18 2V18" stroke="#444" stroke-width="1"/><rect x="4" y="9" width="4" height="7" fill="#e02020"/><rect x="10" y="7" width="4" height="9" fill="#1a9a30"/><rect x="16" y="5" width="4" height="8" fill="#e02020"/>`),
 `<svg width="26" height="24" viewBox="0 0 26 24"><rect x="7" y="1" width="18" height="17" fill="#fff" stroke="#3f8ee6" stroke-width="1.6"/><rect x="1" y="5" width="20" height="18" fill="#fff" stroke="#3f8ee6" stroke-width="1.6"/><path d="M4 11h5M4 14h5M4 17h5M11 11h6M11 14h6M11 17h6" stroke="#777" stroke-width="1.4"/></svg>`,
 bx(si('F10','#1c5fd0',400,13)),
 bx(`<path d="M6 5H11V9H6ZM15 10H20V14H15ZM15 16H20V20H15Z" fill="#f5b432"/><path d="M8 9V18H15M8 12H15" stroke="#f09020" fill="none"/>`),
 bx(si('自','#f07020',400,16)),
 bx(si('F12','#1c5fd0',400,12)),
 bx(`<text x="5" y="17" font-family="Liberation Serif" font-style="italic" font-size="15" fill="#1c5fd0" font-weight="700">f</text><text x="10" y="16" font-family="Liberation Sans" font-size="10" fill="#1c5fd0">(x)</text>`,'#30a8a0'),
 bx(`<circle cx="12" cy="12" r="5.5" fill="none" stroke="#2a7be0" stroke-width="2.2"/>`),
 'sep',
 bx(`<path d="M3 9L7 6L11 10L15 6L21 9M3 14L7 11L11 15L15 11L21 14" fill="none" stroke="#e04060" stroke-width="1.4"/><path d="M3 19L7 16L11 20L15 16L21 19" fill="none" stroke="#2040d0" stroke-width="1.4"/>`),
 `<svg width="30" height="24" viewBox="0 0 30 24"><text x="15" y="18" font-family="Liberation Sans" font-size="15" font-weight="700" fill="#2a3cc0" text-anchor="middle">RSI</text></svg>`,
 `<svg width="26" height="28" viewBox="0 0 26 28"><path d="M13 0L18 6H8Z" fill="#c02020"/><text x="13" y="24" font-family="Liberation Sans" font-size="20" font-weight="700" fill="#c83030" text-anchor="middle">S</text></svg>`,
 `<svg width="26" height="26" viewBox="0 0 26 26"><path d="M13 1L18 7H15V11H19V8L25 13L19 18V15H15V19H18L13 25L8 19H11V15H7V18L1 13L7 8V11H11V7H8Z" fill="#1448d8"/></svg>`,
 `<svg width="26" height="26" viewBox="0 0 26 26"><path d="M3 23L5 16L19 2L24 7L10 21Z" fill="#f0a830" stroke="#a07020"/><path d="M3 23L5 16L10 21Z" fill="#555"/><path d="M17 4L22 9" stroke="#c04020" stroke-width="2"/></svg>`,
 'sep2',
 bx(si('F5','#1c5fd0',400,15)),
 bx(`<path d="M5 11A7 7 0 0 1 18 9L20 7V13H14L16 11A5 5 0 0 0 7 12Z" fill="#4cc04c"/><path d="M19 13A7 7 0 0 1 6 15L4 17V11H10L8 13A5 5 0 0 0 17 12Z" fill="#70cc60"/>`),
 ...['1','5','15','30','60','日','周','月','N','多','季','年'].map(s=>'T'+s)];
def('tdx-sidebar',`:host{display:flex;flex-direction:column;flex:none;width:37px;height:1324px;box-sizing:border-box;background:#f2f2f2;border-left:2px solid #d0d0d0;overflow:hidden}
.i{height:34.4px;flex:none;display:flex;align-items:center;justify-content:center;color:#2458a8;font-size:19px}svg{display:block}
.s{height:11.9px;flex:none;position:relative}.s::after{content:"";position:absolute;left:3px;right:3px;top:5px;height:1px;background:#999}
.s2{height:14.4px}.s2::after{top:6px}
.on{background:#fafafa;border:1px solid #ddd;border-top-color:#aaa;border-left-color:#aaa;box-sizing:border-box;height:34.4px}`,
()=>icons.map(x=>x==='sep'?`<div class="s"></div>`:x==='sep2'?`<div class="s s2"></div>`:x[0]==='T'?`<div class="i ${x==='T日'?'on':''}">${x.slice(1)}</div>`:`<div class="i">${x}</div>`).join(''));

/* ---------- status bar ---------- */
def('tdx-statusbar',`:host{display:flex;flex:none;height:35px;background:#f1f1f1;align-items:center;padding-left:3px;box-sizing:border-box;white-space:nowrap;color:#222;overflow:hidden;border-top:1px solid #ccc;line-height:30px}
.c{flex:none;overflow:visible}.g{color:#008a10;font-weight:700;font-size:21px}.k{color:#111;font-weight:700;font-size:20.5px}.l{font-size:22px;font-family:"Noto Sans CJK SC",sans-serif;color:#333}
u{text-decoration:none;font-size:22px;font-weight:400;font-family:"Noto Sans CJK SC",sans-serif}.sep{width:1px;height:32px;background:#aaa;margin-right:5px;flex:none}svg{display:block}`,
()=>{const it=[[25,'g',''],[53,'l','上证'],[102,'g','3054.99'],[74,'g','-3.71'],[87,'g','-0.12%'],[95,'k','3689<u>亿</u>'],[53,'l','深证'],[95,'g','11094.9'],[81,'g','-14.61'],[88,'g','-0.13%'],[98,'k','4524<u>亿</u>'],[51,'l','中小'],[98,'g','7602.74'],[78,'g','-36.24'],[86,'g','-0.47%'],[98,'k','536.4<u>亿</u>']];
 let s=`<div class="c" style="width:22px"><svg width="19" height="22" viewBox="0 0 19 22"><rect x="1" y="1" width="17" height="20" rx="2" fill="#f8b030" stroke="#c08020"/><rect x="4" y="5" width="11" height="8" fill="#ffe8b0"/></svg></div>`;
 it.slice(1).forEach(a=>s+=`<div class="c ${a[1]}" style="width:${a[0]}px">${a[2]}</div>`);
 return s+`<div class="sep"></div><div class="c l" style="width:81px">总成交</div><div class="c k">8213<u>亿</u></div>`;});

/* ---------- watermark ---------- */
def('tdx-watermark',`:host{position:absolute;left:1361px;top:1314px;width:799px;height:81px;background:rgba(123,168,215,.97);display:flex;align-items:center;overflow:hidden}
.a{font:900 55px/1 "Noto Sans CJK SC",sans-serif;color:#10108e;margin-left:16px;width:280px;white-space:nowrap;-webkit-text-stroke:1.2px #10108e}
svg{flex:none;margin-left:26px;display:block}.u{font:700 66.5px/1 "Liberation Serif",serif;color:#fff;margin-left:23px;white-space:nowrap;margin-top:-5px;-webkit-text-stroke:.8px #fff}`,
`<div class="a">公式指标网</div><svg width="80" height="80" viewBox="0 0 80 80"><path d="M4 40A36 36 0 0 1 76 40" fill="none" stroke="#d9604a" stroke-width="7"/><path d="M76 42A36 36 0 0 1 42 76" fill="none" stroke="#e8c64a" stroke-width="8"/><path d="M34 2H46L45 20H52V26H60V32H52V64H46V76H34V64H28V32H20V26H28V20H35Z" fill="#e8c64a"/><circle cx="40" cy="12" r="4" fill="#7ba8d7"/><path d="M30 36H50M30 48H50M40 26V62" stroke="#b8923a" stroke-width="2.5"/><path id="wm" d="M4 44A36 36 0 0 0 34 75" fill="none"/><text font-family="Liberation Sans" font-size="7" fill="#fff"><textPath href="#wm">www.9m8.cn</textPath></text></svg><div class="u">www.9m8.cn</div>`);
</script>
</body></html>
